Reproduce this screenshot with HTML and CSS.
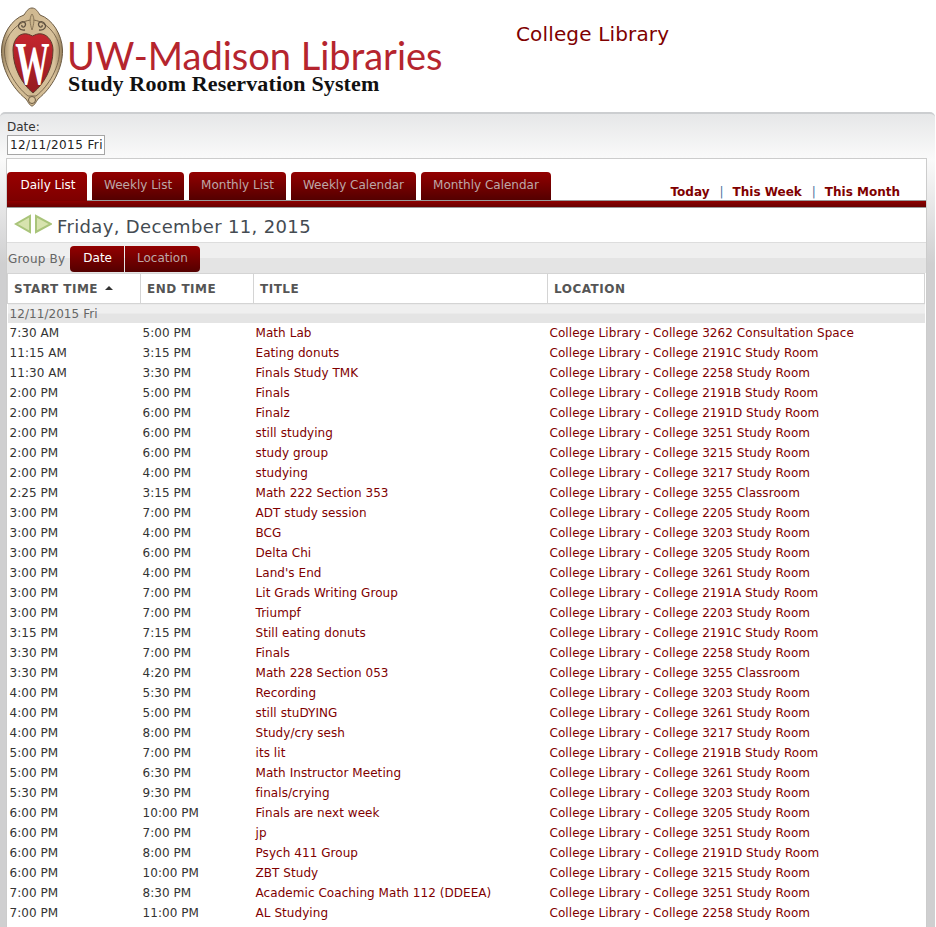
FILE: index.html
```html
<!DOCTYPE html>
<html lang="en">
<head>
    <meta charset="UTF-8">
    <meta name="viewport" content="width=device-width, initial-scale=1.0">
    <title>Study Room Reservation System</title>
    <link rel="stylesheet" href="styles.css">
</head>
<body>
    <div class="header">
        <svg class="crest" width="64" height="108" viewBox="0 0 64 108">
            <defs>
                <linearGradient id="tan" x1="0" y1="0" x2="1" y2="0">
                    <stop offset="0" stop-color="#97805c"/>
                    <stop offset="0.14" stop-color="#d8c29c"/>
                    <stop offset="0.5" stop-color="#cfb890"/>
                    <stop offset="0.86" stop-color="#d8c29c"/>
                    <stop offset="1" stop-color="#97805c"/>
                </linearGradient>
                <linearGradient id="shield" x1="0" y1="0" x2="0" y2="1">
                    <stop offset="0" stop-color="#c5262e"/>
                    <stop offset="1" stop-color="#941a20"/>
                </linearGradient>
            </defs>
            <path d="M32 8 C28 8 26 12 24 15 C12 19 2 34 1.500 50 C1 68 12 88 26 99 C28 102 30 106 32 106 C34 106 36 102 38 99 C52 88 63 68 62.500 50 C62 34 52 19 40 15 C38 12 36 8 32 8Z" fill="url(#tan)" stroke="#6b5a42" stroke-width="1"/>
            <path d="M32 20 C20 20 5 34 4.500 50 C4 66 15 86 28 96 L36 96 C49 86 60 66 59.500 50 C59 34 44 20 32 20Z" fill="none" stroke="#7a674c" stroke-width="1"/>
            <path d="M25 30 C19 31 17 26 20 23 C23 20 27 23 25 26 C24 28 21 27 22 25" fill="none" stroke="#5f5140" stroke-width="1.300"/>
            <path d="M39 30 C45 31 47 26 44 23 C41 20 37 23 39 26 C40 28 43 27 42 25" fill="none" stroke="#5f5140" stroke-width="1.300"/>
            <path d="M32 14 C29 18 30 24 32 30 C34 24 35 18 32 14Z" fill="#c9b38a" stroke="#7a674c" stroke-width="0.800"/>
            <path d="M13 50 C13 42 17 35 23 34 C27 33 30 35 32.500 36 C35 35 38 33 42 34 C48 35 53 42 53 50 C53 68 44 84 33 93 C22 84 13 68 13 50Z" fill="url(#shield)" stroke="#5f3a2c" stroke-width="1"/>
            <text class="crest-w" transform="translate(32.500 84) scale(0.78 1.380)">W</text>
            <circle cx="32" cy="100" r="3.500" fill="#d8c39c" stroke="#6b5a42" stroke-width="1"/>
        </svg>
        <div class="brand">
            <div class="brand-name">UW-Madison Libraries</div>
            <div class="brand-sub">Study Room Reservation System</div>
        </div>
        <div class="library-name">College Library</div>
    </div>

    <div class="panel">
        <div class="date-field">
            <label class="date-label" for="dateInput">Date:</label>
            <input class="date-input" id="dateInput" type="text" value="12/11/2015 Fri">
        </div>

        <div class="content">
            <div class="tabbar">
                <a class="tab tab-active">Daily List</a>
                <a class="tab">Weekly List</a>
                <a class="tab">Monthly List</a>
                <a class="tab">Weekly Calendar</a>
                <a class="tab">Monthly Calendar</a>
                <div class="quick-links">
                    <a>Today</a><span class="sep">|</span><a>This Week</a><span class="sep">|</span><a>This Month</a>
                </div>
            </div>
            <div class="redbar"></div>

            <div class="dayline">
                <svg class="arrows" width="38" height="20" viewBox="0 0 38 20">
                    <path d="M16 2 L16 18 L2 10Z" fill="#d7e3ae" stroke="#a9c47a" stroke-width="2"/>
                    <path d="M22 2 L22 18 L37 10Z" fill="#d7e3ae" stroke="#a9c47a" stroke-width="2"/>
                </svg>
                <span class="day-title">Friday, December 11, 2015</span>
            </div>

            <div class="groupbar">
                <span class="group-label">Group By</span>
                <a class="group-btn group-btn-active">Date</a>
                <a class="group-btn">Location</a>
            </div>

            <table class="events">
                <thead>
                    <tr>
                        <th class="col-start">START TIME <span class="sort-up"></span></th>
                        <th class="col-end">END TIME</th>
                        <th class="col-title">TITLE</th>
                        <th>LOCATION</th>
                    </tr>
                </thead>
                <tbody>
                    <tr class="group-row"><td colspan="4">12/11/2015 Fri</td></tr>
                    <tr><td>7:30 AM</td><td>5:00 PM</td><td><a>Math Lab</a></td><td><a>College Library - College 3262 Consultation Space</a></td></tr>
                    <tr><td>11:15 AM</td><td>3:15 PM</td><td><a>Eating donuts</a></td><td><a>College Library - College 2191C Study Room</a></td></tr>
                    <tr><td>11:30 AM</td><td>3:30 PM</td><td><a>Finals Study TMK</a></td><td><a>College Library - College 2258 Study Room</a></td></tr>
                    <tr><td>2:00 PM</td><td>5:00 PM</td><td><a>Finals</a></td><td><a>College Library - College 2191B Study Room</a></td></tr>
                    <tr><td>2:00 PM</td><td>6:00 PM</td><td><a>Finalz</a></td><td><a>College Library - College 2191D Study Room</a></td></tr>
                    <tr><td>2:00 PM</td><td>6:00 PM</td><td><a>still studying</a></td><td><a>College Library - College 3251 Study Room</a></td></tr>
                    <tr><td>2:00 PM</td><td>6:00 PM</td><td><a>study group</a></td><td><a>College Library - College 3215 Study Room</a></td></tr>
                    <tr><td>2:00 PM</td><td>4:00 PM</td><td><a>studying</a></td><td><a>College Library - College 3217 Study Room</a></td></tr>
                    <tr><td>2:25 PM</td><td>3:15 PM</td><td><a>Math 222 Section 353</a></td><td><a>College Library - College 3255 Classroom</a></td></tr>
                    <tr><td>3:00 PM</td><td>7:00 PM</td><td><a>ADT study session</a></td><td><a>College Library - College 2205 Study Room</a></td></tr>
                    <tr><td>3:00 PM</td><td>4:00 PM</td><td><a>BCG</a></td><td><a>College Library - College 3203 Study Room</a></td></tr>
                    <tr><td>3:00 PM</td><td>6:00 PM</td><td><a>Delta Chi</a></td><td><a>College Library - College 3205 Study Room</a></td></tr>
                    <tr><td>3:00 PM</td><td>4:00 PM</td><td><a>Land's End</a></td><td><a>College Library - College 3261 Study Room</a></td></tr>
                    <tr><td>3:00 PM</td><td>7:00 PM</td><td><a>Lit Grads Writing Group</a></td><td><a>College Library - College 2191A Study Room</a></td></tr>
                    <tr><td>3:00 PM</td><td>7:00 PM</td><td><a>Triumpf</a></td><td><a>College Library - College 2203 Study Room</a></td></tr>
                    <tr><td>3:15 PM</td><td>7:15 PM</td><td><a>Still eating donuts</a></td><td><a>College Library - College 2191C Study Room</a></td></tr>
                    <tr><td>3:30 PM</td><td>7:00 PM</td><td><a>Finals</a></td><td><a>College Library - College 2258 Study Room</a></td></tr>
                    <tr><td>3:30 PM</td><td>4:20 PM</td><td><a>Math 228 Section 053</a></td><td><a>College Library - College 3255 Classroom</a></td></tr>
                    <tr><td>4:00 PM</td><td>5:30 PM</td><td><a>Recording</a></td><td><a>College Library - College 3203 Study Room</a></td></tr>
                    <tr><td>4:00 PM</td><td>5:00 PM</td><td><a>still stuDYING</a></td><td><a>College Library - College 3261 Study Room</a></td></tr>
                    <tr><td>4:00 PM</td><td>8:00 PM</td><td><a>Study/cry sesh</a></td><td><a>College Library - College 3217 Study Room</a></td></tr>
                    <tr><td>5:00 PM</td><td>7:00 PM</td><td><a>its lit</a></td><td><a>College Library - College 2191B Study Room</a></td></tr>
                    <tr><td>5:00 PM</td><td>6:30 PM</td><td><a>Math Instructor Meeting</a></td><td><a>College Library - College 3261 Study Room</a></td></tr>
                    <tr><td>5:30 PM</td><td>9:30 PM</td><td><a>finals/crying</a></td><td><a>College Library - College 3203 Study Room</a></td></tr>
                    <tr><td>6:00 PM</td><td>10:00 PM</td><td><a>Finals are next week</a></td><td><a>College Library - College 3205 Study Room</a></td></tr>
                    <tr><td>6:00 PM</td><td>7:00 PM</td><td><a>jp</a></td><td><a>College Library - College 3251 Study Room</a></td></tr>
                    <tr><td>6:00 PM</td><td>8:00 PM</td><td><a>Psych 411 Group</a></td><td><a>College Library - College 2191D Study Room</a></td></tr>
                    <tr><td>6:00 PM</td><td>10:00 PM</td><td><a>ZBT Study</a></td><td><a>College Library - College 3215 Study Room</a></td></tr>
                    <tr><td>7:00 PM</td><td>8:30 PM</td><td><a>Academic Coaching Math 112 (DDEEA)</a></td><td><a>College Library - College 3251 Study Room</a></td></tr>
                    <tr><td>7:00 PM</td><td>11:00 PM</td><td><a>AL Studying</a></td><td><a>College Library - College 2258 Study Room</a></td></tr>
                </tbody>
            </table>
        </div>
    </div>
</body>
</html>
```

FILE: styles.css
```css
html, body {
    height: 927px;
    overflow: hidden;
}
body {
    font-family: "DejaVu Sans", Verdana, sans-serif;
    font-size: 12px;
    margin: 0;
    padding: 0;
    background-color: #fff;
    color: #333;
}
a {
    color: #800000;
    text-decoration: none;
}

/* header */
.header {
    height: 112px;
    display: flex;
    align-items: flex-start;
}
.crest {
    flex: none;
}
.crest-w {
    font-family: "Liberation Serif", serif;
    font-size: 44px;
    font-weight: bold;
    fill: #fff;
    text-anchor: middle;
}
.brand {
    margin: 39px 0 0 3px;
    width: 390px;
}
.brand-name {
    font-family: "Lato", sans-serif;
    font-size: 38px;
    line-height: 33px;
    color: #b5252e;
    white-space: nowrap;
}
.brand-sub {
    font-family: "Liberation Serif", serif;
    font-weight: bold;
    font-size: 22px;
    line-height: 24px;
    letter-spacing: 0.14px;
    color: #111;
    white-space: nowrap;
    margin-left: 1px;
}
.library-name {
    margin: 21px 0 0 59px;
    font-size: 20px;
    line-height: 26px;
    letter-spacing: 0.15px;
    color: #800000;
    white-space: nowrap;
}

/* grey panel */
.panel {
    height: 815px;
    margin-right: 1px;
    padding: 6px 8px 0 6px;
    box-sizing: border-box;
    border-top: 2px solid #ccced0;
    border-radius: 5px 5px 0 0;
    background: linear-gradient(to bottom, #e6e7e8 0, #fafafa 45px, #cfcfd0 150px, #cfcfd0 100%);
}
.date-field {
    height: 38px;
    padding-left: 1px;
}
.date-label {
    display: block;
    line-height: 14px;
    color: #333;
}
.date-input {
    display: block;
    width: 98px;
    height: 20px;
    margin-top: 1px;
    padding: 0 2px;
    box-sizing: border-box;
    border: 1px solid #a6a6a6;
    font-family: inherit;
    font-size: 12px;
    letter-spacing: 0.4px;
    color: #222;
    background-color: #fff;
}

/* white content box */
.content {
    background-color: #fff;
    border: 1px solid #ccc;
    border-bottom: none;
    height: 780px;
}
.tabbar {
    height: 29px;
    margin-top: 13px;
    display: flex;
    align-items: flex-start;
    gap: 5px;
    background: linear-gradient(#999, #999) bottom / 100% 1px no-repeat;
}
.tab {
    height: 28px;
    line-height: 26px;
    padding: 0 12px;
    box-sizing: border-box;
    border-radius: 4px 4px 0 0;
    background: linear-gradient(to bottom, #930000, #540000);
    color: #bda7a7;
}
.tab-active {
    height: 29px;
    width: 80px;
    text-align: center;
    padding: 0 0 0 2px;
    color: #fff;
    background: linear-gradient(to bottom, #9a0000, #7d0000);
}
.quick-links {
    margin: 12px 26px 0 auto;
    font-weight: bold;
    line-height: 17px;
}
.sep {
    color: #4a72a0;
    font-weight: normal;
    margin: 0 9px 0 10px;
}
.redbar {
    height: 6px;
    background: linear-gradient(to bottom, #8e0000, #670000);
}
.dayline {
    height: 36px;
    display: flex;
    align-items: center;
    gap: 5px;
    padding-left: 7px;
    border-top: 1px solid #999;
    border-bottom: 1px solid #ddd;
    box-sizing: border-box;
}
.arrows {
    margin-bottom: 2px;
}
.day-title {
    margin-top: 2px;
    font-size: 18px;
    letter-spacing: 0.35px;
    color: #444b52;
}
.groupbar {
    height: 30px;
    display: flex;
    align-items: center;
    background: linear-gradient(to bottom, #efefef 50%, #e4e4e4 50%);
    box-sizing: border-box;
    padding: 2px 0 0 1px;
}
.group-label {
    margin: 0 5px 0 0;
    letter-spacing: 0.2px;
    color: #666;
}
.group-btn {
    height: 26px;
    line-height: 25px;
    padding: 0 12px;
    box-sizing: border-box;
    border-radius: 0 4px 4px 0;
    background: linear-gradient(to bottom, #930000, #540000);
    color: #bda7a7;
    margin-left: 1px;
}
.group-btn-active {
    border-radius: 4px 0 0 4px;
    padding: 0 12px 0 13px;
    color: #fff;
    margin-left: 0;
}

/* events table */
.events {
    width: 918px;
    border-collapse: collapse;
    table-layout: fixed;
}
.events th {
    height: 30px;
    padding: 0 0 0 6px;
    box-sizing: border-box;
    border: 1px solid #d4d4d4;
    text-align: left;
    font-size: 12px;
    color: #555;
    background-color: #fff;
    letter-spacing: 0.5px;
}
.col-start {
    width: 133px;
}
.col-end {
    width: 113px;
}
.col-title {
    width: 294px;
}
.sort-up {
    display: inline-block;
    vertical-align: 3px;
    margin-left: 2px;
    border-left: 4px solid transparent;
    border-right: 4px solid transparent;
    border-bottom: 4px solid #333;
}
.events td {
    height: 20px;
    padding: 0 0 0 2px;
    white-space: nowrap;
    letter-spacing: 0.06px;
    color: #333;
}
.group-row td {
    height: 19px;
    color: #666;
    background: linear-gradient(to bottom, #efefef 50%, #e4e4e4 50%);
}
```
